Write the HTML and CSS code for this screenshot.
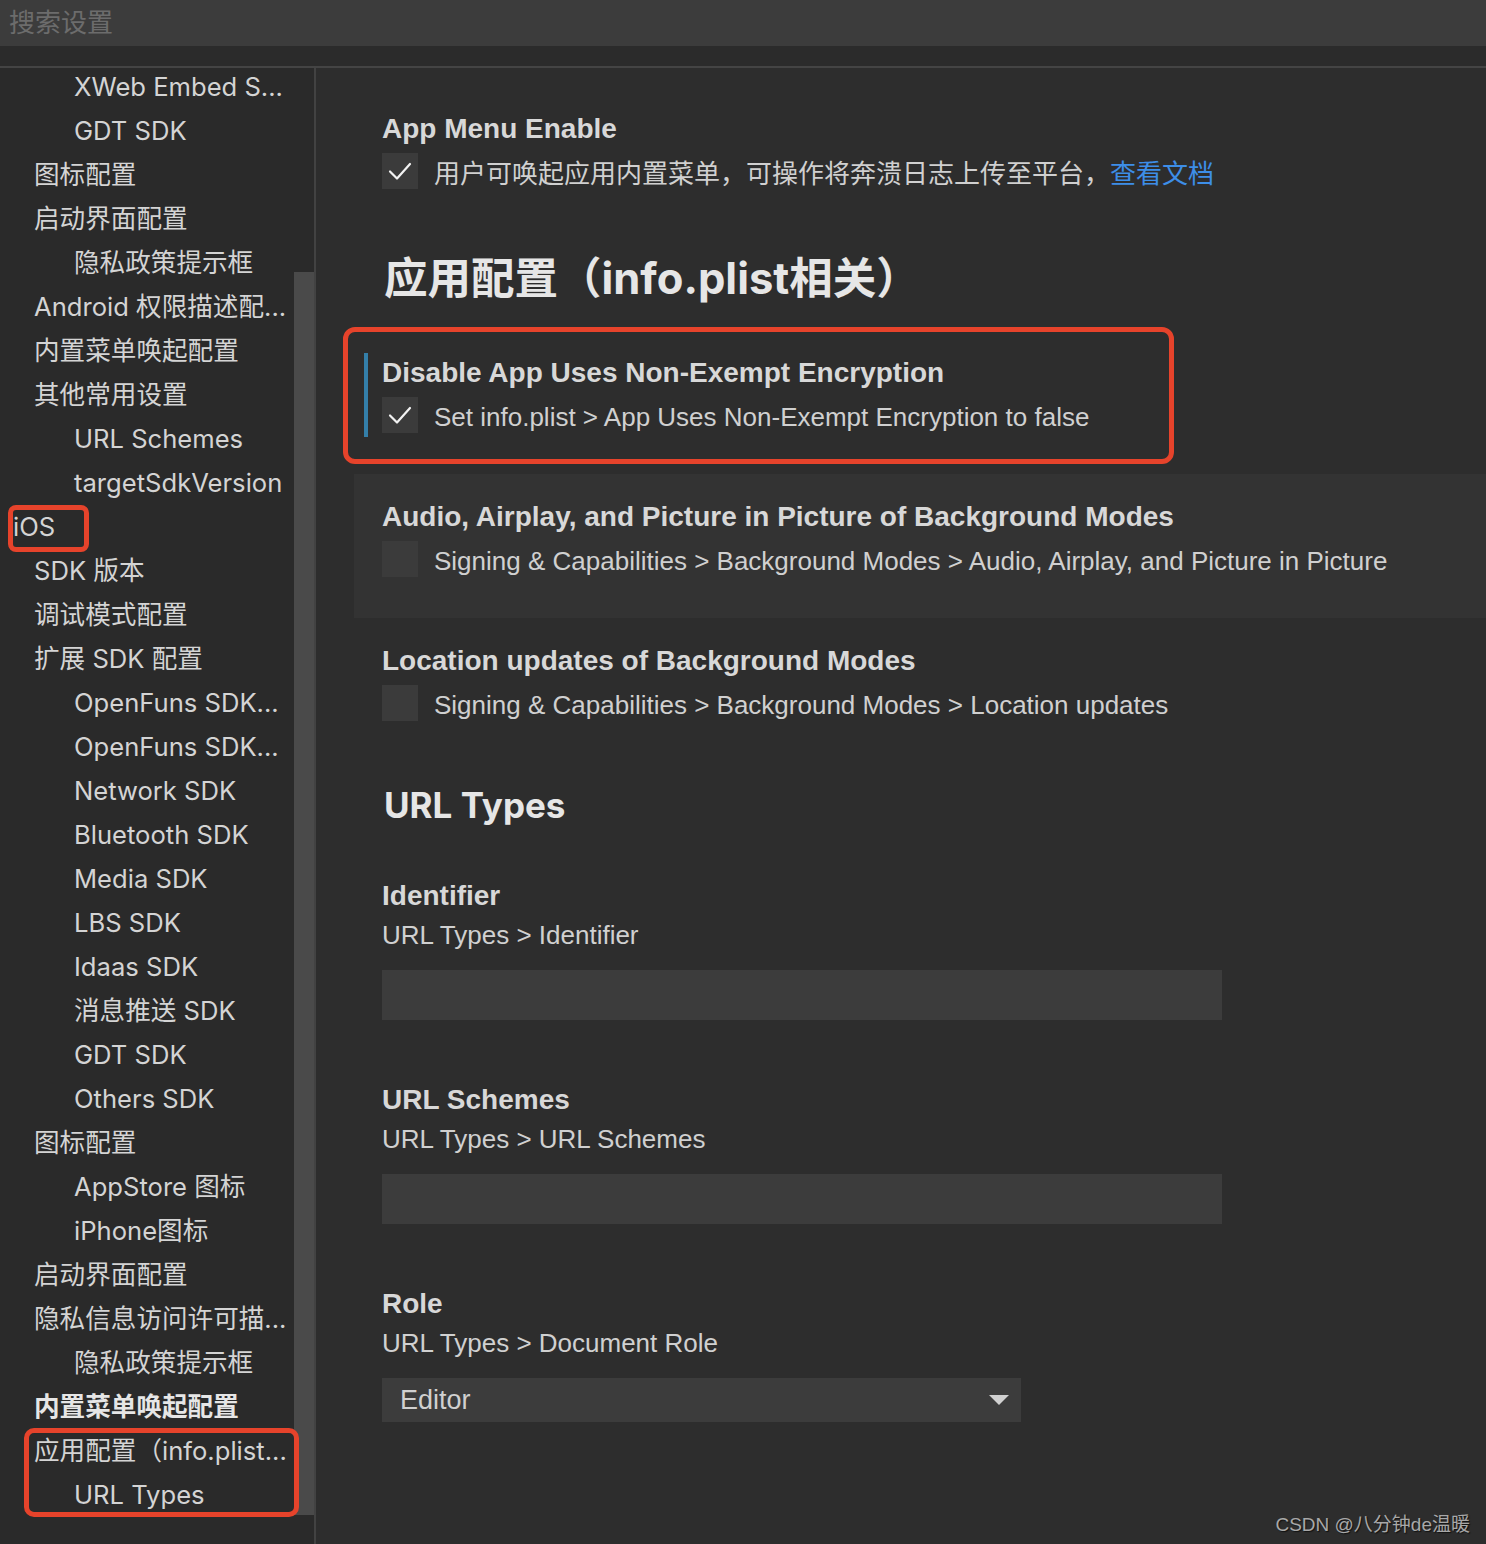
FILE: index.html
```html
<!DOCTYPE html>
<html lang="zh-CN">
<head>
<meta charset="utf-8">
<title>设置</title>
<link rel="stylesheet" href="styles.css">
</head>
<body>
<div class="page">
  <div class="search">搜索设置</div>
  <div class="strip"></div>
  <div class="main">
    <aside class="sidebar">
      <ul class="nav">
        <li class="l2">XWeb Embed S...</li>
        <li class="l2">GDT SDK</li>
        <li class="l1">图标配置</li>
        <li class="l1">启动界面配置</li>
        <li class="l2">隐私政策提示框</li>
        <li class="l1">Android 权限描述配...</li>
        <li class="l1">内置菜单唤起配置</li>
        <li class="l1">其他常用设置</li>
        <li class="l2">URL Schemes</li>
        <li class="l2">targetSdkVersion</li>
        <li class="l0">iOS</li>
        <li class="l1">SDK 版本</li>
        <li class="l1">调试模式配置</li>
        <li class="l1">扩展 SDK 配置</li>
        <li class="l2">OpenFuns SDK...</li>
        <li class="l2">OpenFuns SDK...</li>
        <li class="l2">Network SDK</li>
        <li class="l2">Bluetooth SDK</li>
        <li class="l2">Media SDK</li>
        <li class="l2">LBS SDK</li>
        <li class="l2">Idaas SDK</li>
        <li class="l2">消息推送 SDK</li>
        <li class="l2">GDT SDK</li>
        <li class="l2">Others SDK</li>
        <li class="l1">图标配置</li>
        <li class="l2">AppStore 图标</li>
        <li class="l2">iPhone图标</li>
        <li class="l1">启动界面配置</li>
        <li class="l1">隐私信息访问许可描...</li>
        <li class="l2">隐私政策提示框</li>
        <li class="l1 active">内置菜单唤起配置</li>
        <li class="l1">应用配置（info.plist...</li>
        <li class="l2">URL Types</li>
      </ul>
      <div class="scrollbar"><div class="thumb"></div></div>
    </aside>
    <section class="content">
      <div class="setting">
        <h3>App Menu Enable</h3>
        <div class="row">
          <span class="cb"><svg viewBox="0 0 36 36" width="36" height="36"><polyline points="8,18.5 15,25.5 28,11" fill="none" stroke="#f2f2f2" stroke-width="2.2" stroke-linecap="round" stroke-linejoin="round"/></svg></span>
          <span class="desc cjk">用户可唤起应用内置菜单，可操作将奔溃日志上传至平台，<a class="link">查看文档</a></span>
        </div>
      </div>

      <h2 class="section">应用配置（info.plist相关）</h2>

      <div class="setting modified">
        <h3>Disable App Uses Non-Exempt Encryption</h3>
        <div class="row">
          <span class="cb"><svg viewBox="0 0 36 36" width="36" height="36"><polyline points="8,18.5 15,25.5 28,11" fill="none" stroke="#f2f2f2" stroke-width="2.2" stroke-linecap="round" stroke-linejoin="round"/></svg></span>
          <span class="desc">Set info.plist &gt; App Uses Non-Exempt Encryption to false</span>
        </div>
      </div>

      <div class="setting hover">
        <h3>Audio, Airplay, and Picture in Picture of Background Modes</h3>
        <div class="row">
          <span class="cb"></span>
          <span class="desc">Signing &amp; Capabilities &gt; Background Modes &gt; Audio, Airplay, and Picture in Picture</span>
        </div>
      </div>

      <div class="setting">
        <h3>Location updates of Background Modes</h3>
        <div class="row">
          <span class="cb"></span>
          <span class="desc">Signing &amp; Capabilities &gt; Background Modes &gt; Location updates</span>
        </div>
      </div>

      <h2 class="group">URL Types</h2>

      <div class="setting field">
        <h3>Identifier</h3>
        <div class="row"><span class="desc">URL Types &gt; Identifier</span></div>
        <div class="input"></div>
      </div>

      <div class="setting field">
        <h3>URL Schemes</h3>
        <div class="row"><span class="desc">URL Types &gt; URL Schemes</span></div>
        <div class="input"></div>
      </div>

      <div class="setting field">
        <h3>Role</h3>
        <div class="row"><span class="desc">URL Types &gt; Document Role</span></div>
        <div class="select">
          <span class="select-value">Editor</span>
          <svg class="caret" viewBox="0 0 20 10" width="20" height="10"><polygon points="0,0 20,0 10,10" fill="#d0d0d0"/></svg>
        </div>
      </div>
    </section>
  </div>

  <div class="mark mark-ios"></div>
  <div class="mark mark-nav"></div>
  <div class="mark mark-main"></div>
  <div class="watermark">CSDN @八分钟de温暖</div>
</div>
</body>
</html>
```

FILE: styles.css
```css
html, body {
  margin: 0;
  padding: 0;
  background: #2d2d2d;
}

.page {
  position: relative;
  width: 1486px;
  height: 1544px;
  overflow: hidden;
  background: #2d2d2d;
  font-family: "Liberation Sans", "Noto Sans CJK SC", sans-serif;
  color: #d2d2d2;
}

.search {
  height: 46px;
  line-height: 42px;
  padding-left: 9px;
  background: #3c3c3c;
  color: #6c6c6c;
  font-family: "Noto Sans CJK SC", sans-serif;
  font-size: 26px;
}

.strip {
  height: 20px;
  background: #2b2b2b;
  border-bottom: 2px solid #444444;
}

.main {
  display: flex;
  height: 1476px;
}

.sidebar {
  display: flex;
  width: 314px;
  flex: none;
  background: #2a2a2a;
  border-right: 2px solid #424242;
  overflow: hidden;
}

.nav {
  list-style: none;
  margin: -3px 0 0 0;
  padding: 0;
  width: 294px;
  flex: none;
  font-family: "Inter", "Noto Sans CJK SC", sans-serif;
  font-size: 25.6px;
  color: #d4d4d4;
}

.nav li {
  height: 44px;
  line-height: 44px;
  white-space: nowrap;
  overflow: hidden;
  padding-right: 2px;
}

.nav .l0 { padding-left: 13px; }
.nav .l1 { padding-left: 34px; }
.nav .l2 { padding-left: 74px; }
.nav .active { font-weight: 700; color: #e6e6e6; }

.scrollbar {
  width: 20px;
  flex: none;
}

.thumb {
  margin-top: 204px;
  height: 1243px;
  background: #4a4a4a;
}

.content {
  flex: 1;
  padding: 18px 0 0 38px;
  background: #2d2d2d;
}

.setting {
  position: relative;
  padding: 25px 0 41px 28px;
}

.setting h3 {
  margin: 0;
  height: 36px;
  line-height: 36px;
  font-size: 28px;
  font-weight: 700;
  color: #d8d8d8;
}

.row {
  display: flex;
  align-items: center;
  height: 36px;
  margin-top: 6px;
}

.cb {
  width: 36px;
  height: 36px;
  flex: none;
  background: #3b3b3b;
  margin-right: 16px;
}

.cb svg { display: block; }

.cb + .desc {
  margin-top: 4px;
}

.cb + .desc.cjk {
  margin-top: 0;
}

.desc {
  font-size: 26px;
  white-space: nowrap;
  color: #d0d0d0;
}

.link {
  color: #3d8ee8;
}

.setting.modified::before {
  content: "";
  position: absolute;
  left: 10px;
  top: 23px;
  bottom: 37px;
  width: 4px;
  background: #347fa9;
}

.setting.hover {
  background: #333333;
}

.section {
  margin: 0;
  height: 100px;
  padding-left: 30px;
  line-height: 96px;
  font-family: "Inter", "Noto Sans CJK SC", sans-serif;
  font-size: 43.5px;
  font-weight: 700;
  color: #e6e6e6;
}

.group {
  margin: 0;
  height: 89px;
  padding-left: 30px;
  line-height: 86px;
  font-family: "Inter", "Noto Sans CJK SC", sans-serif;
  font-size: 35px;
  font-weight: 700;
  color: #e6e6e6;
}

.setting.field {
  padding-top: 27px;
  padding-bottom: 35px;
}

.setting.field .row {
  margin-top: 3px;
}

.input {
  margin-top: 17px;
  width: 840px;
  height: 50px;
  background: #3c3c3c;
}

.select {
  margin-top: 17px;
  width: 639px;
  height: 44px;
  background: #3c3c3c;
  display: flex;
  align-items: center;
  justify-content: space-between;
  padding: 0 12px 0 18px;
  box-sizing: border-box;
}

.select-value {
  font-size: 27px;
  color: #d0d0d0;
}

.caret { display: block; }

.mark {
  position: absolute;
  box-sizing: border-box;
  border: 5px solid #e6432b;
  border-radius: 10px;
}

.mark-ios {
  left: 8px;
  top: 505px;
  width: 81px;
  height: 47px;
  border-radius: 8px;
}

.mark-nav {
  left: 24px;
  top: 1428px;
  width: 275px;
  height: 89px;
}

.mark-main {
  left: 343px;
  top: 327px;
  width: 831px;
  height: 137px;
  border-radius: 12px;
}

.watermark {
  position: absolute;
  right: 16px;
  bottom: 8px;
  font-size: 19px;
  color: #a8a8a8;
  text-shadow: 1px 1px 1px #111;
}
```
